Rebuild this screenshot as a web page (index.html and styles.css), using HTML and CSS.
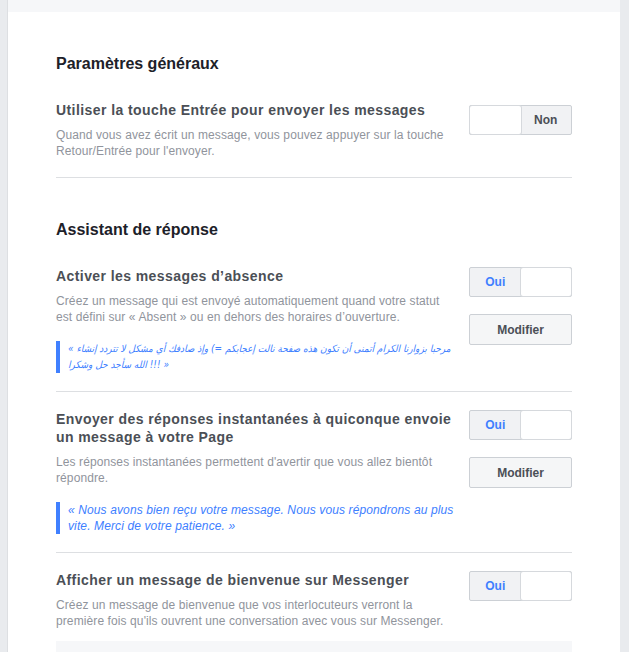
FILE: index.html
```html
<!DOCTYPE html>
<html lang="fr">
<head>
<meta charset="utf-8">
<title>Paramètres</title>
<link rel="stylesheet" href="styles.css">
</head>
<body>
<div class="card">
  <div class="band"></div>

  <section class="section">
    <h2 class="heading">Paramètres généraux</h2>
    <div class="row">
      <div class="text">
        <div class="title">Utiliser la touche Entrée pour envoyer les messages</div>
        <div class="desc">Quand vous avez écrit un message, vous pouvez appuyer sur la touche Retour/Entrée pour l'envoyer.</div>
      </div>
      <div class="controls controls-low">
        <div class="toggle"><span class="half knob"></span><span class="half state">Non</span></div>
      </div>
    </div>
  </section>

  <section class="section">
    <h2 class="heading">Assistant de réponse</h2>
    <div class="row">
      <div class="text">
        <div class="title">Activer les messages d’absence</div>
        <div class="desc">Créez un message qui est envoyé automatiquement quand votre statut est défini sur « Absent » ou en dehors des horaires d’ouverture.</div>
        <div class="quote quote-ar">« مرحبا بزوارنا الكرام أتمنى أن تكون هذه صفحة نالت إعجابكم =) وإذ صادفك أي مشكل لا تتردد إنشاء الله سأجد حل وشكرا !!! »</div>
      </div>
      <div class="controls">
        <div class="toggle"><span class="half state on">Oui</span><span class="half knob"></span></div>
        <button class="btn">Modifier</button>
      </div>
    </div>

    <div class="row">
      <div class="text">
        <div class="title">Envoyer des réponses instantanées à quiconque envoie un message à votre Page</div>
        <div class="desc">Les réponses instantanées permettent d'avertir que vous allez bientôt répondre.</div>
        <div class="quote quote-latin">« Nous avons bien reçu votre message. Nous vous répondrons au plus vite. Merci de votre patience. »</div>
      </div>
      <div class="controls">
        <div class="toggle"><span class="half state on">Oui</span><span class="half knob"></span></div>
        <button class="btn">Modifier</button>
      </div>
    </div>

    <div class="row row-last">
      <div class="text">
        <div class="title">Afficher un message de bienvenue sur Messenger</div>
        <div class="desc">Créez un message de bienvenue que vos interlocuteurs verront la première fois qu'ils ouvrent une conversation avec vous sur Messenger.</div>
      </div>
      <div class="controls">
        <div class="toggle"><span class="half state on">Oui</span><span class="half knob"></span></div>
      </div>
    </div>
    <div class="preview"></div>
  </section>
</div>
</body>
</html>
```

FILE: styles.css
```css
html, body {
  margin: 0;
  padding: 0;
  background: #e9ebee;
  font-family: "Liberation Sans", Arial, Helvetica, "DejaVu Sans", sans-serif;
  color: #1d2129;
}

.card {
  margin: 0 9px 0 7px;
  border-left: 1px solid #dddfe2;
  background: #fff;
  min-height: 652px;
}

.band {
  height: 12px;
  background: #f6f7f9;
}

.section {
  padding: 42px 48px 0;
}

.heading {
  margin: 0 0 9px;
  font-size: 16px;
  line-height: 20px;
  font-weight: bold;
  color: #1d2129;
}

.row {
  display: flex;
  gap: 13px;
  padding: 18px 0;
  border-bottom: 1px solid #dddfe2;
}

.row-last {
  border-bottom: none;
  padding-bottom: 0;
}

.text {
  width: 400px;
}

.title {
  font-size: 14px;
  line-height: 18px;
  font-weight: bold;
  letter-spacing: 0.42px;
  color: #4b4f56;
  margin-bottom: 8px;
}

.desc {
  font-size: 12px;
  line-height: 16px;
  letter-spacing: 0.1px;
  color: #90949c;
}

.quote {
  margin-top: 16px;
  border-left: 4px solid #4080ff;
  padding-left: 8px;
  font-size: 12px;
  line-height: 16px;
  font-style: italic;
  color: #4080ff;
}

.quote-latin {
  letter-spacing: 0.12px;
}

.quote-ar {
  font-family: "DejaVu Sans Condensed", "DejaVu Sans", sans-serif;
  font-size: 10px;
}

.controls {
  width: 103px;
  display: flex;
  flex-direction: column;
  gap: 17px;
}

.controls-low {
  padding-top: 4px;
}

.toggle {
  display: flex;
  height: 30px;
  box-sizing: border-box;
  border: 1px solid #ccd0d5;
  border-radius: 2px;
  background: #f1f2f4;
}

.half {
  flex: 1;
  display: flex;
  align-items: center;
  justify-content: center;
  font-size: 12px;
  font-weight: bold;
  color: #4b4f56;
}

.half.on {
  color: #4080ff;
}

.knob {
  background: #fff;
  border-radius: 2px;
  box-shadow: 0 0 0 1px #d6d9dd;
}

.btn {
  height: 31px;
  box-sizing: border-box;
  border: 1px solid #ccd0d5;
  border-radius: 2px;
  background: #f5f6f7;
  font-family: inherit;
  font-size: 12px;
  font-weight: bold;
  color: #4b4f56;
  padding: 0;
}

.preview {
  margin-top: 12px;
  height: 40px;
  background: #f6f7f9;
}
```
